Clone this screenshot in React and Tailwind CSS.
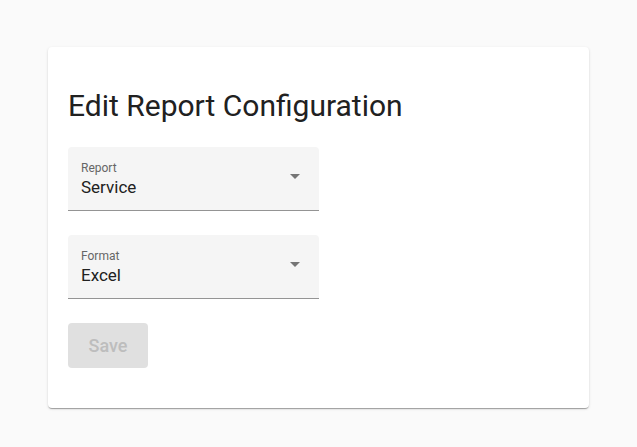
function SelectField({ label, value }) {
  return (
    <div className="relative flex h-16 w-[251px] flex-col rounded-t bg-[#f5f5f5] px-[13px] pt-[13px] border-b border-[#949494]">
      <span className="text-xs leading-4 text-[#666666]">{label}</span>
      <span className="mt-px text-[17px] leading-5 text-[#212121]">{value}</span>
      <svg className="absolute right-[12px] top-[17px]" width="24" height="24" viewBox="0 0 24 24">
        <path d="M7 10l5 5 5-5z" fill="#757575" />
      </svg>
    </div>
  );
}

export default function App() {
  return (
    <div className="min-h-screen bg-[#fafafa] pt-[47px] font-['Roboto',sans-serif]">
      <div className="mx-auto w-[541px] rounded bg-white px-5 pt-[41px] pb-10 shadow-[0_2px_1px_-1px_rgba(0,0,0,0.2),0_1px_1px_0_rgba(0,0,0,0.14),0_1px_3px_0_rgba(0,0,0,0.12)]">
        <h2 className="text-[30px] leading-9 text-[#212121]">Edit Report Configuration</h2>
        <div className="mt-[23px] flex flex-col gap-6">
          <SelectField label="Report" value="Service" />
          <SelectField label="Format" value="Excel" />
          <button
            disabled
            className="h-[45px] w-20 cursor-not-allowed rounded bg-[#e0e0e0] text-lg font-medium text-[#bdbdbd]"
          >
            Save
          </button>
        </div>
      </div>
    </div>
  );
}
